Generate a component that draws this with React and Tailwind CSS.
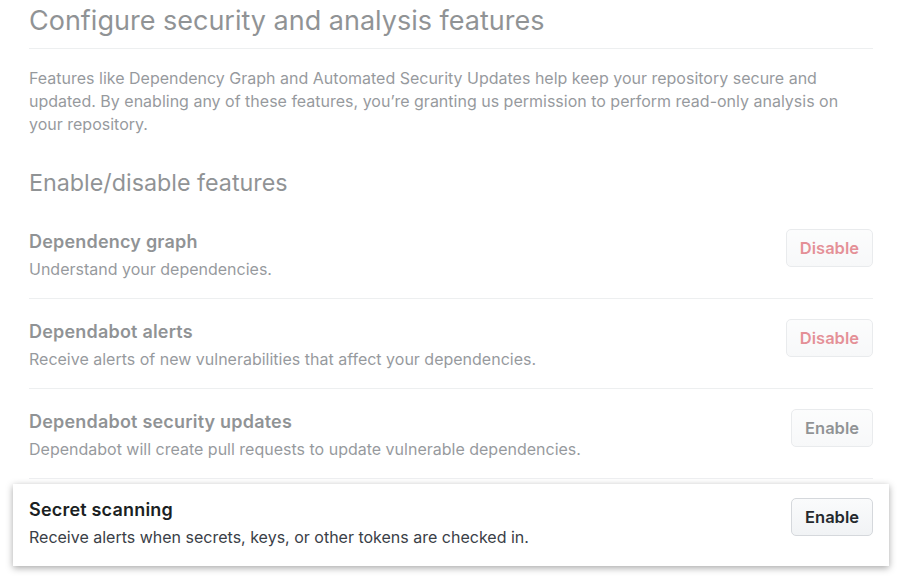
const features = [
  {
    title: "Dependency graph",
    desc: "Understand your dependencies.",
    action: "Disable",
  },
  {
    title: "Dependabot alerts",
    desc: "Receive alerts of new vulnerabilities that affect your dependencies.",
    action: "Disable",
  },
  {
    title: "Dependabot security updates",
    desc: "Dependabot will create pull requests to update vulnerable dependencies.",
    action: "Enable",
  },
];

function Button({ label, className = "" }) {
  const danger = label === "Disable";
  return (
    <button
      className={`h-[38px] px-[13px] rounded-[5px] border border-[#d5d8dc] bg-gradient-to-b from-[#fafbfc] to-[#f1f3f5] text-[16.5px] font-semibold shrink-0 ${
        danger ? "text-[#cb2431]" : "text-[#24292e]"
      } ${className}`}
    >
      {label}
    </button>
  );
}

export default function App() {
  return (
    <div
      className="w-[903px] h-[578px] bg-white overflow-hidden pl-[29px] pr-[30px]"
      style={{ fontFamily: "Inter, 'Noto Sans', sans-serif" }}
    >
      <div className="opacity-50">
        <h2 className="pt-[3px] text-[27px] leading-[36px] text-[#24292e] font-normal">
          Configure security and analysis features
        </h2>
        <div className="mt-[9px] border-t border-[#dde0e3]" />
        <p className="mt-[18px] text-[16px] leading-[23px] text-[#2f363d]">
          Features like Dependency Graph and Automated Security Updates help keep
          your repository secure and updated. By enabling any of these features,
          you’re granting us permission to perform read-only analysis on your
          repository.
        </p>
        <h3 className="mt-[32px] text-[23.3px] leading-[30px] text-[#24292e] font-normal">
          Enable/disable features
        </h3>
        <div className="mt-[11px]">
          {features.map((f) => (
            <div
              key={f.title}
              className="flex justify-between items-start pt-5 pb-[17px] border-b border-[#dde0e3]"
            >
              <div>
                <div className="text-[18px] leading-[26px] font-semibold tracking-[0.2px] text-[#24292e]">
                  {f.title}
                </div>
                <div className="mt-[2px] text-[16px] leading-[24px] text-[#2f363d]">
                  {f.desc}
                </div>
              </div>
              <Button label={f.action} />
            </div>
          ))}
        </div>
      </div>
      <div className="-mx-4 mt-[5px] px-4 pt-[13px] pb-[17px] bg-white shadow-[0_2px_7px_rgba(0,0,0,0.35)] flex justify-between items-start">
        <div>
          <div className="text-[18px] leading-[26px] font-semibold tracking-[0.2px] text-[#1b1f23]">
            Secret scanning
          </div>
          <div className="mt-[2px] text-[16px] leading-[24px] text-[#3a4047]">
            Receive alerts when secrets, keys, or other tokens are checked in.
          </div>
        </div>
        <Button label="Enable" className="mt-[1px]" />
      </div>
    </div>
  );
}
